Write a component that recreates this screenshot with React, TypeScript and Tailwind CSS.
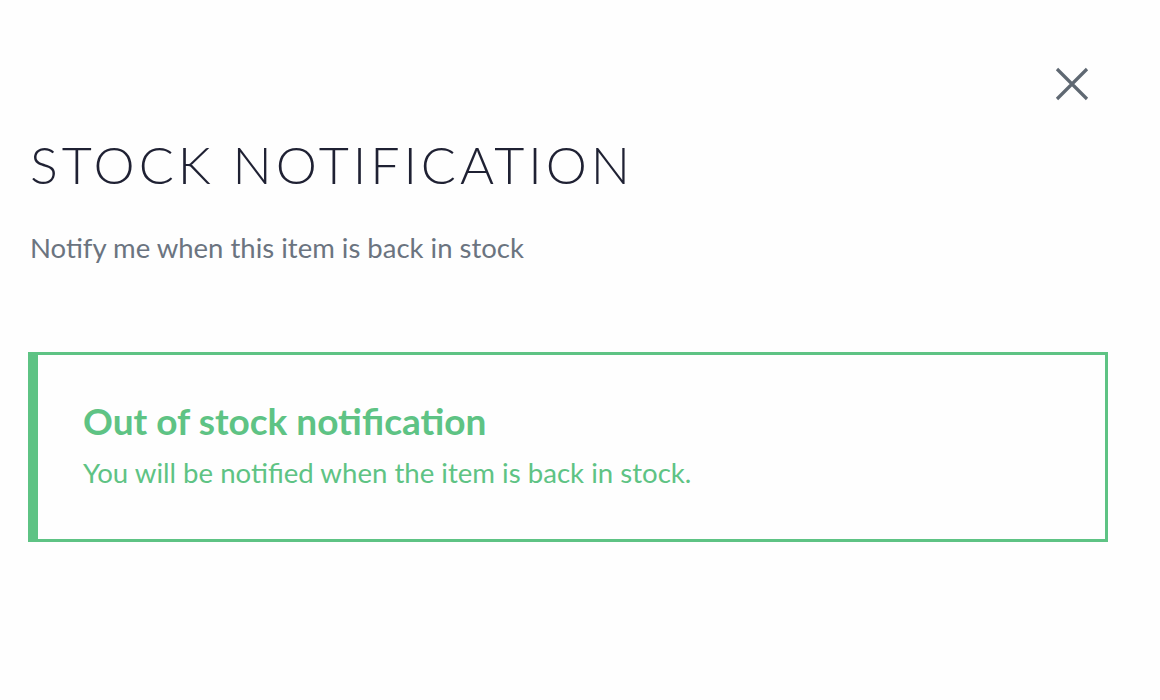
import React from "react";

const StockNotification = () => {
    return (
        <div className="w-[1160px] h-[700px] bg-[#fefefe] font-['Lato','Liberation_Sans',sans-serif]">
            <div className="flex flex-row justify-end pt-[64px] pr-[68px]">
                <button type="button" aria-label="Close" className="w-[40px] h-[40px] flex items-center justify-center text-[#5f6872]">
                    <svg width="34" height="34" viewBox="0 0 34 34" fill="none" stroke="currentColor" strokeWidth="3.2">
                        <path d="M2 2L32 32M32 2L2 32" />
                    </svg>
                </button>
            </div>

            <div className="px-[28px]">
                <h2 className="mt-[32px] pl-[2px] text-[52px] leading-[56px] font-light tracking-[0.075em] text-[#1f2133]">
                    STOCK NOTIFICATION
                </h2>
                <p className="mt-[39px] pl-[2px] text-[27.5px] leading-[34px] font-normal text-[#6b7480]">
                    Notify me when this item is back in stock
                </p>

                <div className="mt-[87px] w-[1080px] h-[190px] border-[3px] border-l-[10px] border-[#5ec384] flex flex-col pt-[45px] pl-[45px]">
                    <h3 className="text-[37px] leading-[42px] font-bold text-[#5ec384]">
                        Out of stock notification
                    </h3>
                    <p className="mt-[14px] text-[27.6px] leading-[34px] font-normal text-[#5ec384]">
                        You will be notified when the item is back in stock.
                    </p>
                </div>
            </div>
        </div>
    );
};

export default StockNotification;
